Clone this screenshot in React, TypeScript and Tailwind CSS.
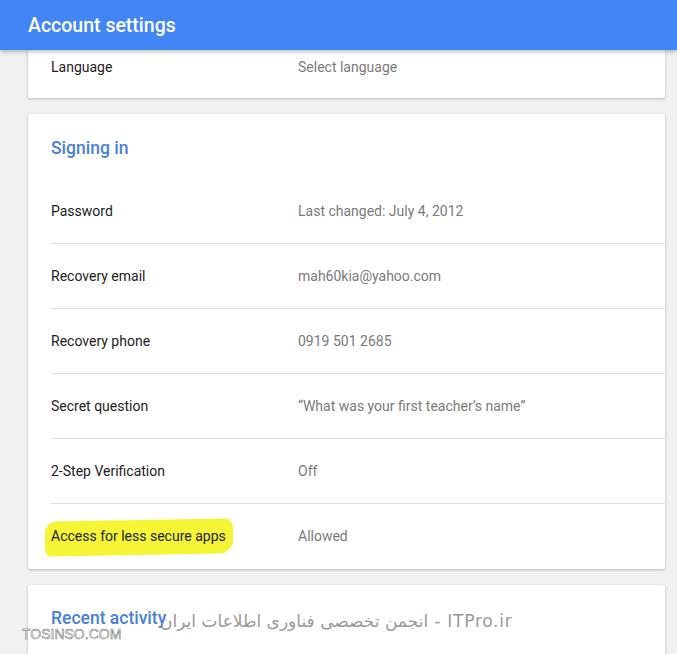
import React from "react";

const rows = [
  { label: "Password", value: "Last changed: July 4, 2012" },
  { label: "Recovery email", value: "mah60kia@yahoo.com" },
  { label: "Recovery phone", value: "0919 501 2685" },
  { label: "Secret question", value: "“What was your first teacher’s name”" },
  { label: "2-Step Verification", value: "Off" },
  { label: "Access for less secure apps", value: "Allowed", marked: true },
];

function Row({ label, value, marked, last }: { label: string; value: string; marked?: boolean; last?: boolean }) {
  return (
    <div className={`flex items-center h-[65px] ml-[23px] ${last ? "" : "border-b border-[#e0e0e0]"}`}>
      <div className="w-[247px] text-[14px] text-[#222]">
        {marked ? (
          <span className="relative inline-block">
            <span className="absolute -left-[6px] -right-[7px] -top-[6px] -bottom-[8px] bg-[#f5f535] rounded-[12px_8px_14px_6px] -rotate-[1deg]" />
            <span className="relative">{label}</span>
          </span>
        ) : (
          label
        )}
      </div>
      <div className="text-[14px] text-[#7a7a7a]">{value}</div>
    </div>
  );
}

export default function App() {
  return (
    <div className="relative w-[677px] h-[654px] overflow-hidden bg-[#f1f1f1] font-['Roboto',sans-serif]">
      <header className="relative z-10 h-[50px] bg-[#4285f4] flex items-center pl-[28px] pt-[1px] shadow-[0_2px_4px_rgba(0,0,0,0.25)]">
        <h1 className="text-[19.5px] font-medium text-white">Account settings</h1>
      </header>

      <div className="ml-[28px] mr-[12px] flex flex-col gap-[16px]">
        <div className="h-[48px] bg-white rounded-b-[2px] shadow-[0_1px_3px_rgba(0,0,0,0.25)] flex pt-[7px] pl-[23px] text-[14px]">
          <div className="w-[247px] text-[#222]">Language</div>
          <div className="text-[#7a7a7a]">Select language</div>
        </div>

        <div className="bg-white rounded-[2px] shadow-[0_1px_3px_rgba(0,0,0,0.25)]">
          <h2 className="h-[65px] pl-[23px] pt-[21px] text-[17.5px] font-medium text-[#4a7fd6]">Signing in</h2>
          {rows.map((r, i) => (
            <Row key={r.label} {...r} last={i === rows.length - 1} />
          ))}
        </div>

        <div className="h-[100px] bg-white rounded-[2px] shadow-[0_1px_3px_rgba(0,0,0,0.25)]">
          <h2 className="pl-[23px] pt-[20px] text-[17.5px] font-medium text-[#4a7fd6]">Recent activity</h2>
        </div>
      </div>

      <div
        dir="rtl"
        className="absolute left-[160px] top-[609px] text-[17px] tracking-[0.75px] text-[#999] font-['DejaVu_Sans','Noto_Sans',sans-serif] whitespace-nowrap"
      >
        ITPro.ir - انجمن تخصصی فناوری اطلاعات ایران
      </div>
      <div className="absolute left-[22px] top-[624px] text-[14px] text-white font-['Liberation_Sans',sans-serif] [-webkit-text-stroke:0.5px_#666]">
        TOSINSO.COM
      </div>
    </div>
  );
}
